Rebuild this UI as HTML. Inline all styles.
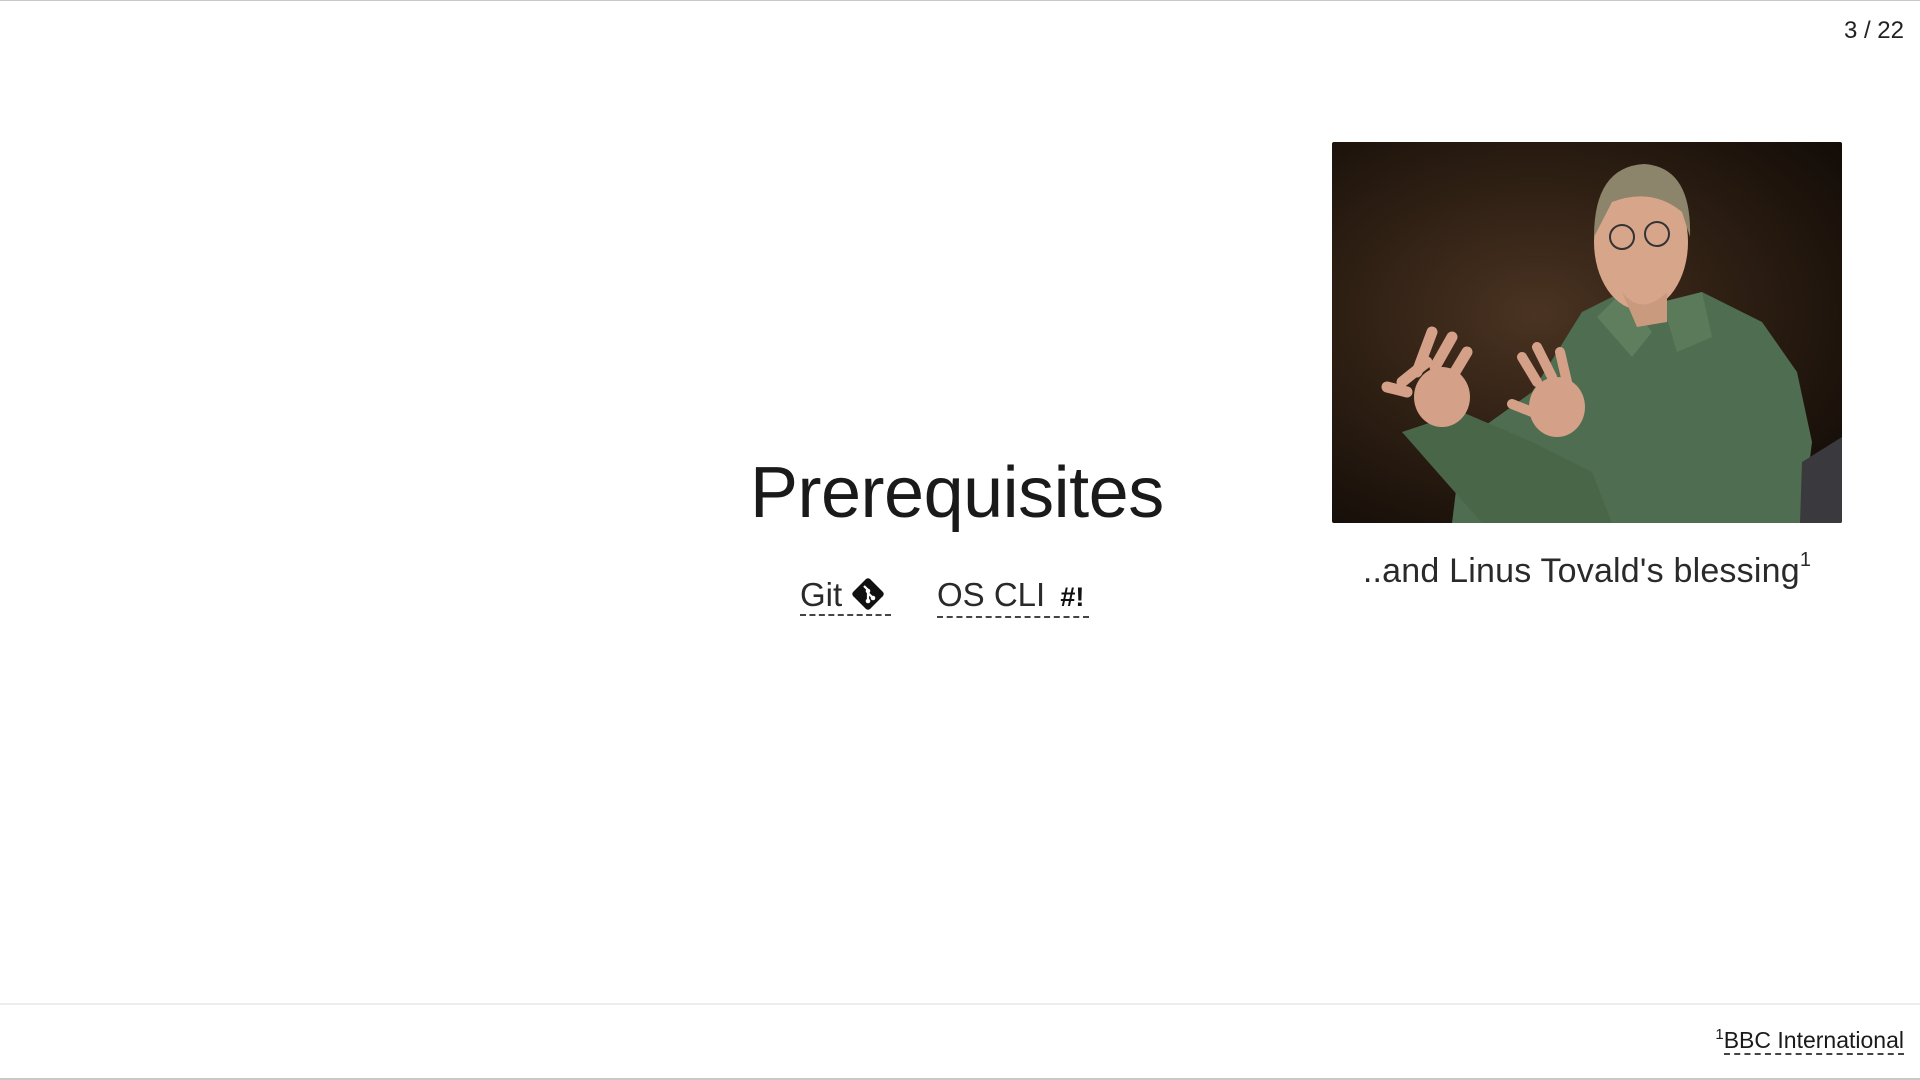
<!DOCTYPE html>
<html><head><meta charset="utf-8"><style>
html,body{margin:0;padding:0;width:1920px;height:1080px;background:#fff;overflow:hidden;font-family:"Liberation Sans",sans-serif;color:#1a1a1a;position:relative}
.top{position:absolute;left:0;top:0;width:1920px;height:1px;background:#c8c8c8}
.bot{position:absolute;left:0;top:1078px;width:1920px;height:2px;background:#c8c8c8}
.sep{position:absolute;left:0;top:1003px;width:1920px;height:2px;background:#ececf0}
.pn{position:absolute;right:16px;top:17px;font-size:24px;color:#222}
.title{position:absolute;left:750px;top:452px;font-size:72px;color:#1a1a1a;white-space:nowrap;letter-spacing:-0.5px}
.lnk{position:absolute;top:576px;font-size:33px;color:#2a2a2a;border-bottom:2px dashed #444;line-height:38px;white-space:nowrap}
.cap{position:absolute;left:1332px;width:510px;text-align:center;top:552px;font-size:34px;color:#2a2a2a;white-space:nowrap;letter-spacing:0.2px}
.cap sup{font-size:20px;position:relative;top:-4px}
.foot{position:absolute;right:16px;top:1026px;font-size:23px;color:#1a1a1a;white-space:nowrap}
.foot span{border-bottom:2px dashed #444}
.foot sup{font-size:15px}
.img{position:absolute;left:1332px;top:142px;width:510px;height:381px;border-radius:2px;overflow:hidden;background:radial-gradient(ellipse at 40% 45%,#4a3322 0%,#2e1f13 45%,#0d0805 100%)}
</style></head><body>
<div class="top"></div>
<div class="pn">3 / 22</div>
<div class="title">Prerequisites</div>
<div class="lnk" style="left:800px;width:91px">Git <svg width="34" height="34" viewBox="0 0 34 34" style="vertical-align:-5px"><rect x="5" y="5" width="24" height="24" rx="3" transform="rotate(45 17 17)" fill="#111"/><path d="M13 9 L17 13 L17 24 M17 16 L22 21" stroke="#fff" stroke-width="2.2" fill="none"/><circle cx="17" cy="14" r="2.3" fill="#fff"/><circle cx="17" cy="24" r="2.3" fill="#fff"/><circle cx="22" cy="21" r="2.3" fill="#fff"/></svg></div>
<div class="lnk" style="left:937px;width:152px">OS CLI <b style="font-size:27px;color:#111;margin-left:6px">#!</b></div>
<div class="img"><svg width="510" height="381" viewBox="0 0 510 381">
<path d="M120 381 L130 300 L200 250 L250 170 L290 150 L330 160 L370 150 L430 180 L465 230 L480 300 L470 381 Z" fill="#4f6d50"/>
<path d="M290 150 L320 190 L300 215 L265 175 Z" fill="#5e7e5e"/>
<path d="M330 160 L370 150 L380 195 L345 210 Z" fill="#5b7a5a"/>
<path d="M70 290 L130 270 L200 300 L260 330 L280 381 L150 381 Z" fill="#496649"/>
<ellipse cx="309" cy="100" rx="47" ry="68" fill="#d7a68a"/>
<path d="M262 95 Q262 25 312 22 Q360 25 358 95 L350 70 Q320 45 280 60 Z" fill="#8d846c"/>
<circle cx="290" cy="95" r="12" fill="none" stroke="#333" stroke-width="2"/><circle cx="325" cy="92" r="12" fill="none" stroke="#333" stroke-width="2"/>
<path d="M290 150 Q310 175 335 150 L335 180 L305 185 Z" fill="#c99a7e"/>
<ellipse cx="110" cy="255" rx="28" ry="30" fill="#d4a088"/>
<path d="M70 240 L95 220 M85 230 L100 190 M103 225 L120 195 M120 235 L135 210 M75 250 L55 245" stroke="#d4a088" stroke-width="11" stroke-linecap="round"/>
<ellipse cx="225" cy="265" rx="28" ry="30" fill="#d4a088"/>
<path d="M205 240 L190 215 M220 235 L205 205 M235 240 L228 210 M200 270 L180 262" stroke="#d4a088" stroke-width="10" stroke-linecap="round"/>
<path d="M470 320 L510 295 L510 381 L468 381 Z" fill="#3a3a3e"/>
</svg></div>
<div class="cap">..and Linus Tovald's blessing<sup>1</sup></div>
<div class="sep"></div>
<div class="foot"><sup>1</sup><span>BBC International</span></div>
<div class="bot"></div>
</body></html>
